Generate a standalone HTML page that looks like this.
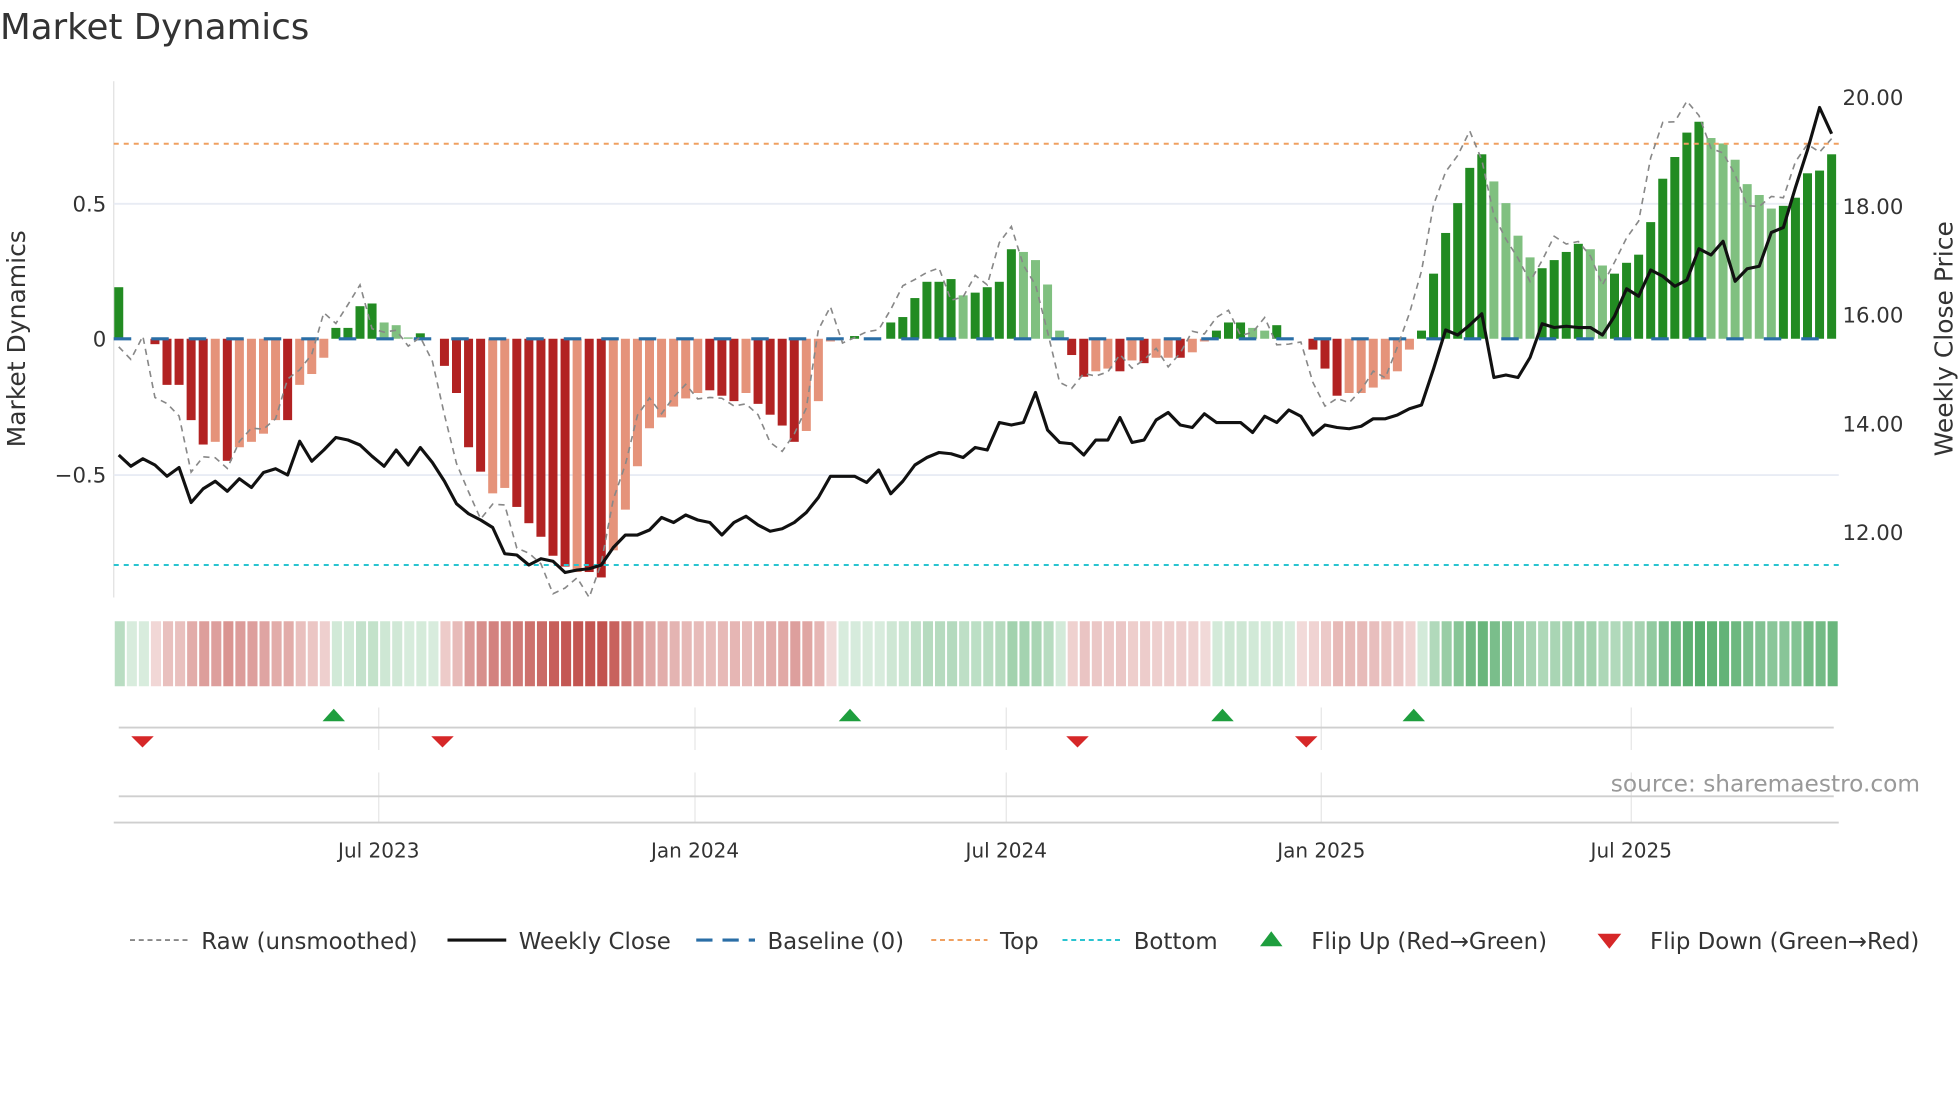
<!DOCTYPE html>
<html><head><meta charset="utf-8"><style>
html,body{margin:0;padding:0;background:#fff;}
svg{display:block;font-family:"DejaVu Sans","Liberation Sans",sans-serif;}
</style></head><body>
<svg id="s" width="1960" height="1102" viewBox="0 0 1568 881.6" xmlns="http://www.w3.org/2000/svg">
<rect width="1568" height="882" fill="#fff"/>
<text x="0" y="31" font-size="28.5" fill="#333">Market Dynamics</text>
<line x1="91" y1="65" x2="91" y2="478" stroke="#e0e0e0" stroke-width="1"/>
<line x1="91" y1="163" x2="1471" y2="163" stroke="#e8ecf4" stroke-width="1.5"/>
<line x1="91" y1="380" x2="1471" y2="380" stroke="#e8ecf4" stroke-width="1.5"/>
<text x="85" y="169" font-size="17" fill="#333" text-anchor="end">0.5</text>
<text x="85" y="277" font-size="17" fill="#333" text-anchor="end">0</text>
<text x="85" y="386" font-size="17" fill="#333" text-anchor="end">−0.5</text>
<text transform="translate(20,271) rotate(-90)" font-size="20" fill="#333" text-anchor="middle">Market Dynamics</text>
<text x="1474" y="84" font-size="17" fill="#333">20.00</text>
<text x="1474" y="171" font-size="17" fill="#333">18.00</text>
<text x="1474" y="258" font-size="17" fill="#333">16.00</text>
<text x="1474" y="345" font-size="17" fill="#333">14.00</text>
<text x="1474" y="432" font-size="17" fill="#333">12.00</text>
<text transform="translate(1562,271) rotate(-90)" font-size="20" fill="#333" text-anchor="middle">Weekly Close Price</text>
<g id="bars"></g>
<line x1="91" y1="115" x2="1471" y2="115" stroke="#f0a060" stroke-width="1.6" stroke-dasharray="4,4"/>
<line x1="91" y1="452" x2="1471" y2="452" stroke="#2ac4d0" stroke-width="1.6" stroke-dasharray="4,4"/>
<line x1="91" y1="271" x2="1471" y2="271" stroke="#2a6ea6" stroke-width="2.5" stroke-dasharray="14,16"/>
<polyline id="raw" fill="none" stroke="#888" stroke-width="1.3" stroke-dasharray="5,4"/>
<polyline id="close" fill="none" stroke="#111" stroke-width="2.5" stroke-linejoin="round"/>
<g id="heat"></g>
<g stroke="#e6e6e6" stroke-width="1">
<line x1="303" y1="566" x2="303" y2="600"/><line x1="556" y1="566" x2="556" y2="600"/><line x1="805" y1="566" x2="805" y2="600"/><line x1="1057" y1="566" x2="1057" y2="600"/><line x1="1305" y1="566" x2="1305" y2="600"/>
<line x1="303" y1="618" x2="303" y2="658"/><line x1="556" y1="618" x2="556" y2="658"/><line x1="805" y1="618" x2="805" y2="658"/><line x1="1057" y1="618" x2="1057" y2="658"/><line x1="1305" y1="618" x2="1305" y2="658"/>
</g>
<line x1="95" y1="582" x2="1467" y2="582" stroke="#cfcfcf" stroke-width="1.5"/>
<line x1="95" y1="637" x2="1467" y2="637" stroke="#cfcfcf" stroke-width="1.5"/>
<line x1="91" y1="658" x2="1471" y2="658" stroke="#cfcfcf" stroke-width="1.5"/>
<g fill="#1e9e3e">
<polygon points="258,577 267,567 276,577"/><polygon points="671,577 680,567 689,577"/><polygon points="969,577 978,567 987,577"/><polygon points="1122,577 1131,567 1140,577"/>
</g>
<g fill="#d62728">
<polygon points="105,589 123,589 114,598"/><polygon points="345,589 363,589 354,598"/><polygon points="853,589 871,589 862,598"/><polygon points="1036,589 1054,589 1045,598"/>
</g>
<text x="1536" y="633" font-size="18.6" fill="#999" text-anchor="end">source: sharemaestro.com</text>
<g font-size="16" fill="#333" text-anchor="middle">
<text x="303" y="686">Jul 2023</text><text x="556" y="686">Jan 2024</text><text x="805" y="686">Jul 2024</text><text x="1057" y="686">Jan 2025</text><text x="1305" y="686">Jul 2025</text>
</g>
<g font-size="18.3" fill="#333">
<line x1="104" y1="752" x2="150" y2="752" stroke="#888" stroke-width="1.5" stroke-dasharray="4,3"/>
<text x="161" y="759">Raw (unsmoothed)</text>
<line x1="358" y1="752" x2="405" y2="752" stroke="#111" stroke-width="2.5"/>
<text x="415" y="759">Weekly Close</text>
<line x1="557" y1="752" x2="604" y2="752" stroke="#2a6ea6" stroke-width="2.5" stroke-dasharray="13,8"/>
<text x="614" y="759">Baseline (0)</text>
<line x1="745" y1="752" x2="790" y2="752" stroke="#f0a060" stroke-width="1.6" stroke-dasharray="4,3"/>
<text x="800" y="759">Top</text>
<line x1="850" y1="752" x2="896" y2="752" stroke="#2ac4d0" stroke-width="1.6" stroke-dasharray="4,3"/>
<text x="907" y="759">Bottom</text>
<polygon points="1008,757 1017,745 1026,757" fill="#1e9e3e"/>
<text x="1049" y="759">Flip Up (Red→Green)</text>
<polygon points="1278,747 1297,747 1287.5,759" fill="#d62728"/>
<text x="1320" y="759">Flip Down (Green→Red)</text>
</g>
</svg>
<script>
var d=[["G",.19],["G",0],["G",0],["R",-.02],["R",-.17],["R",-.17],["R",-.30],["R",-.39],["L",-.38],["R",-.45],["L",-.40],["L",-.38],["L",-.35],["L",-.30],["R",-.30],["L",-.17],["L",-.13],["L",-.07],["G",.04],["G",.04],["G",.12],["G",.13],["g",.06],["g",.05],["g",.005],["G",.02],["G",0],["R",-.10],["R",-.20],["R",-.40],["R",-.49],["L",-.57],["L",-.55],["R",-.62],["R",-.68],["R",-.73],["R",-.80],["R",-.84],["L",-.86],["R",-.86],["R",-.88],["L",-.78],["L",-.63],["L",-.47],["L",-.33],["L",-.29],["L",-.25],["L",-.22],["L",-.20],["R",-.19],["R",-.21],["R",-.23],["L",-.20],["R",-.24],["R",-.28],["R",-.32],["R",-.38],["L",-.34],["L",-.23],["L",-.01],["G",0],["G",.01],["G",0],["G",0],["G",.06],["G",.08],["G",.15],["G",.21],["G",.21],["G",.22],["g",.16],["G",.17],["G",.19],["G",.21],["G",.33],["g",.32],["g",.29],["g",.20],["g",.03],["R",-.06],["R",-.14],["L",-.12],["L",-.11],["R",-.12],["L",-.08],["R",-.09],["L",-.07],["L",-.07],["R",-.07],["L",-.05],["L",-.01],["G",.03],["G",.06],["G",.06],["g",.04],["g",.03],["G",.05],["G",0],["R",0],["R",-.04],["R",-.11],["R",-.21],["L",-.20],["L",-.20],["L",-.18],["L",-.15],["L",-.12],["L",-.04],["G",.03],["G",.24],["G",.39],["G",.50],["G",.63],["G",.68],["g",.58],["g",.50],["g",.38],["g",.30],["G",.26],["G",.29],["G",.32],["G",.35],["g",.33],["g",.27],["G",.24],["G",.28],["G",.31],["G",.43],["G",.59],["G",.67],["G",.76],["G",.80],["g",.74],["g",.72],["g",.66],["g",.57],["g",.53],["g",.48],["G",.49],["G",.52],["G",.61],["G",.62],["G",.68]];
var cy=[364,373,367,372,381,374,402,391,385,393,383,390,378,375,380,353,369,360,350,352,356,365,373,360,372,358,370,385,403,411,416,422,443,444,452,447,449,458,456,455,452,438,428,428,424,414,418,412,416,418,428,418,413,420,425,423,418,410,398,381,381,381,386,376,395,385,372,366,362,363,366,358,360,338,340,338,314,344,354,355,364,352,352,334,354,352,336,330,340,342,331,338,338,338,346,333,338,328,333,348,340,342,343,341,335,335,332,327,324,295,264,268,260,251,302,300,302,286,259,262,261,262,262,268,253,231,237,216,221,229,224,199,204,193,225,215,213,186,182,150,120,86,107];
var ns="http://www.w3.org/2000/svg",col={R:"#b22222",L:"#e5937a",G:"#228b22",g:"#80c080"};
var bars=document.getElementById("bars"),heat=document.getElementById("heat"),k=217,w=9.65;
var rp=[],cp=[];
for(var i=0;i<d.length;i++){
 var x=95+w*i,v=d[i][1],h=Math.abs(v)*k;
 if(h>0.3){var r=document.createElementNS(ns,"rect");r.setAttribute("x",x-3.6);r.setAttribute("width",7.2);r.setAttribute("y",v>0?271-h:271);r.setAttribute("height",h);r.setAttribute("fill",col[d[i][0]]);bars.appendChild(r);}
 var c=document.createElementNS(ns,"rect");c.setAttribute("x",91+w*i+0.8);c.setAttribute("width",w-1.6);c.setAttribute("y",497);c.setAttribute("height",52);
 var a=0.2+0.75*Math.min(1,Math.abs(v)/0.9);var g=d[i][0]=="G"||d[i][0]=="g";
 c.setAttribute("fill",g?"rgb(60,160,85)":"rgb(190,70,65)");c.setAttribute("fill-opacity",a);heat.appendChild(c);
 var nv=d[Math.min(d.length-1,i+1)][1],pv=d[Math.max(0,i-1)][1];
 var rv=nv*1.05+(v-pv)*0.4+((i%3)-1)*0.03;
 rp.push(x+","+(271-rv*k).toFixed(1));
 cp.push(x+","+cy[i]);
}
document.getElementById("raw").setAttribute("points",rp.join(" "));
document.getElementById("close").setAttribute("points",cp.join(" "));
</script>
</body></html>
